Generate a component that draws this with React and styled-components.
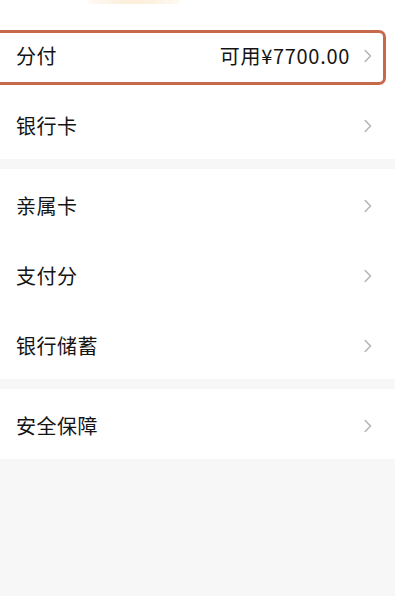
import React from "react";
import styled, { createGlobalStyle } from "styled-components";

const GlobalStyle = createGlobalStyle`
  html, body {
    margin: 0;
    padding: 0;
    background: #ffffff;
  }
  body {
    font-family: "Noto Sans CJK SC", "Noto Sans", sans-serif;
    -webkit-font-smoothing: antialiased;
  }
`;

const groups = [
  [
    { label: "分付", extra: "可用¥7700.00", marked: true },
    { label: "银行卡" },
  ],
  [{ label: "亲属卡" }, { label: "支付分" }, { label: "银行储蓄" }],
  [{ label: "安全保障" }],
];

function Chevron() {
  return (
    <ChevronIcon viewBox="0 0 8 14" width="8" height="14">
      <polyline points="1.2,1.5 6.5,7 1.2,12.5" />
    </ChevronIcon>
  );
}

function Row({ item }) {
  return (
    <RowBox>
      <Label>{item.label}</Label>
      <Right>
        {item.extra && <Extra>{item.extra}</Extra>}
        <Chevron />
      </Right>
      {item.marked && <Marker />}
    </RowBox>
  );
}

export default function App() {
  return (
    <>
      <GlobalStyle />
      <Page>
        <Header>
          <Glow />
        </Header>
        {groups.map((group, gi) => (
          <React.Fragment key={gi}>
            {gi > 0 && <Gap />}
            <Group>
              {group.map((item) => (
                <Row item={item} key={item.label} />
              ))}
            </Group>
          </React.Fragment>
        ))}
        <Filler />
      </Page>
    </>
  );
}

const Page = styled.div`
  width: 395px;
  min-height: 596px;
  display: flex;
  flex-direction: column;
  background: #ffffff;
  overflow: hidden;
`;

const Header = styled.div`
  height: 19px;
  display: flex;
  align-items: flex-start;
`;

const Glow = styled.div`
  margin-left: 88px;
  width: 92px;
  height: 4px;
  border-radius: 0 0 6px 6px;
  background: linear-gradient(90deg, #fffaf3, #fcefdc 40%, #fcefdc 60%, #fffaf3);
`;

const Group = styled.div`
  display: flex;
  flex-direction: column;
  background: #ffffff;
`;

const Gap = styled.div`
  height: 10px;
  background: #f7f7f8;
`;

const RowBox = styled.div`
  position: relative;
  height: 70px;
  display: flex;
  align-items: center;
  justify-content: space-between;
  padding: 3px 23px 0 16px;
  box-sizing: border-box;
`;

const Label = styled.span`
  font-size: 20px;
  color: #141414;
  letter-spacing: 0.5px;
`;

const Right = styled.div`
  display: flex;
  align-items: center;
  gap: 14px;
`;

const Extra = styled.span`
  font-size: 20px;
  color: #141414;
  letter-spacing: 0.7px;
`;

const ChevronIcon = styled.svg`
  display: block;
  fill: none;
  stroke: #b4b4b4;
  stroke-width: 1.5;
  stroke-linecap: round;
  stroke-linejoin: round;
`;

const Marker = styled.div`
  position: absolute;
  top: 11px;
  left: -6px;
  right: 9px;
  height: 55px;
  box-sizing: border-box;
  border: 3.5px solid #c7694b;
  border-radius: 7px;
  pointer-events: none;
`;

const Filler = styled.div`
  flex: 1;
  background: #f7f7f7;
`;
